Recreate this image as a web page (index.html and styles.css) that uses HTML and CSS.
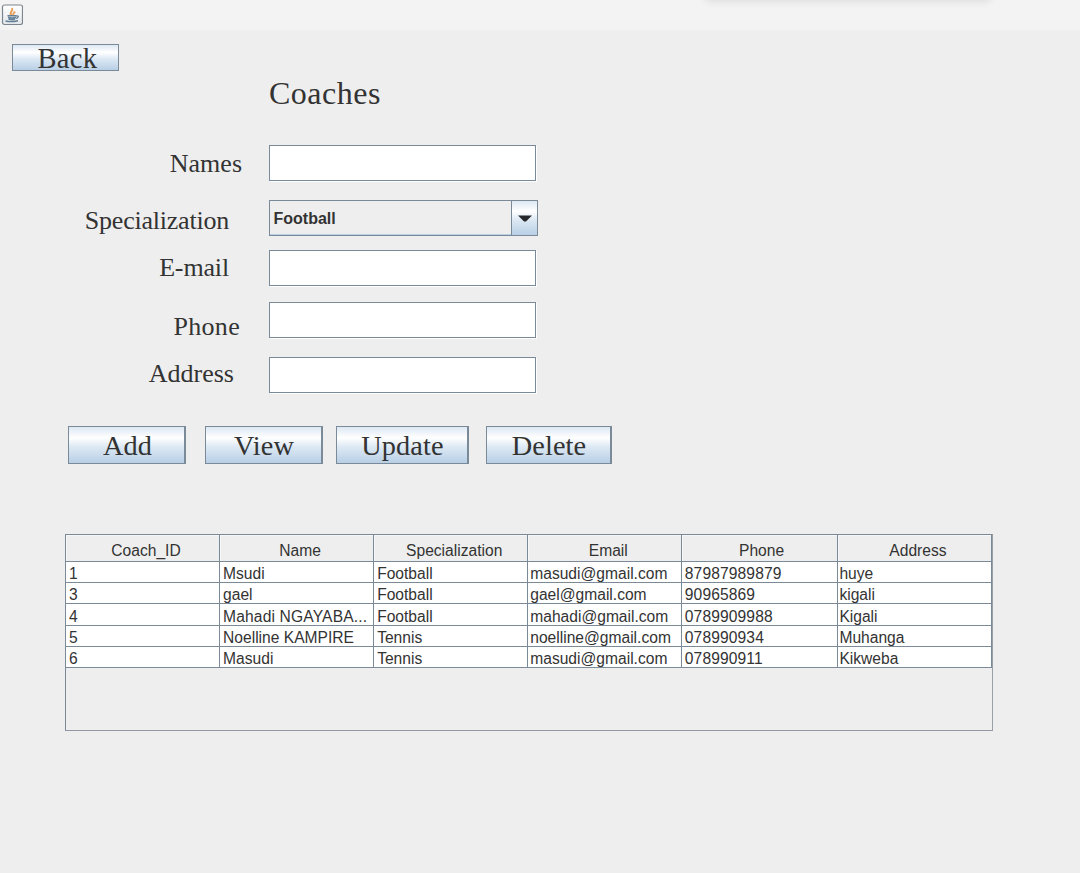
FILE: index.html
```html
<!DOCTYPE html>
<html lang="en">
<head>
<meta charset="utf-8">
<title>Coaches</title>
<link rel="stylesheet" href="styles.css">
</head>
<body>
<header class="titlebar">
<svg class="java-icon" width="22" height="22" viewBox="0 0 22 22">
<defs><linearGradient id="face" x1="0" y1="0" x2="0" y2="1"><stop offset="0" stop-color="#fff"/><stop offset="1" stop-color="#e3e7ea"/></linearGradient></defs>
<rect x="1.500" y="1" width="20" height="19.500" rx="2" fill="url(#face)" stroke="#7c858d" stroke-width="1.200"/>
<path d="M10.500 11.500C7.500 8.500 12.500 7 11 4M12.500 11C11.500 9.500 13.500 8.500 14 7.500" fill="none" stroke="#e9a15b" stroke-width="2"/>
<path d="M6.500 11.800h8.500M7 13.500q4 1 8 0M7.500 15.200q3 1 6.500 0M15 12q3-.5 2 1.200-.5 1-2 1.200M4.500 17q6 1.400 12.500-.2" fill="none" stroke="#668197" stroke-width="1.400"/>
</svg>
</header>
<main class="content">
<button class="btn back">Back</button>
<h1 class="heading">Coaches</h1>
<form class="form">
<div class="row names"><label for="names">Names</label><input id="names" class="field"></div>
<div class="row specialization"><label>Specialization</label><div class="combo"><span class="value">Football</span><span class="arrow"><svg width="14" height="7" viewBox="0 0 14 7"><path d="M0 .5H14L8 6.500H6Z" fill="#26282b"/></svg></span></div></div>
<div class="row email"><label for="email">E-mail</label><input id="email" class="field"></div>
<div class="row phone"><label for="phone">Phone</label><input id="phone" class="field"></div>
<div class="row address"><label for="address">Address</label><input id="address" class="field"></div>
</form>
<div class="actions">
<button class="btn add">Add</button><button class="btn view">View</button><button class="btn update">Update</button><button class="btn delete">Delete</button>
</div>
<div class="scroll-pane">
<table class="grid">
<colgroup><col class="c-id"><col class="c-std"><col class="c-std"><col class="c-std"><col class="c-phone"><col class="c-std"></colgroup>
<thead><tr><th>Coach_ID</th><th>Name</th><th>Specialization</th><th>Email</th><th>Phone</th><th>Address</th></tr></thead>
<tbody>
<tr><td>1</td><td>Msudi</td><td>Football</td><td>masudi@gmail.com</td><td>87987989879</td><td>huye</td></tr>
<tr><td>3</td><td>gael</td><td>Football</td><td>gael@gmail.com</td><td>90965869</td><td>kigali</td></tr>
<tr class="tall"><td>4</td><td class="clipped">Mahadi NGAYABA...</td><td>Football</td><td>mahadi@gmail.com</td><td>0789909988</td><td>Kigali</td></tr>
<tr><td>5</td><td>Noelline KAMPIRE</td><td>Tennis</td><td>noelline@gmail.com</td><td>078990934</td><td>Muhanga</td></tr>
<tr><td>6</td><td>Masudi</td><td>Tennis</td><td>masudi@gmail.com</td><td>078990911</td><td>Kikweba</td></tr>
</tbody>
</table>
</div>
</main>
</body>
</html>
```
FILE: styles.css
```css
* { box-sizing: border-box; }
body { margin: 0; width: 1080px; height: 873px; overflow: hidden; background: #eeeeee; color: #333; font-family: "Liberation Sans", Arial, sans-serif; }
.titlebar { position: relative; height: 30px; padding: 4px 0 0 1px; overflow: hidden; background: #f3f3f3; }
.titlebar::after { content: ""; position: absolute; left: 706px; top: -20px; width: 284px; height: 20px; border-radius: 6px; box-shadow: 0 1px 6px 2px #e2e2e2; }
.java-icon { display: block; }
.content { display: flex; flex-direction: column; align-items: flex-start; padding-top: 14px; }
.btn { display: flex; align-items: center; justify-content: center; padding: 0; border: 1px solid #7a8a99; border-right-width: 2px; border-radius: 0; background: linear-gradient(#dde8f3 0%, #ffffff 30%, #dde9f4 55%, #b8cfe5 100%); color: #333; font: 28.3px/30px "Liberation Serif", "Times New Roman", serif; }
.back { width: 107px; height: 27px; margin-left: 12px; padding: 1px 0 0 4px; font-size: 28.5px; line-height: 25px; letter-spacing: .35px; border-right-width: 1px; }
.heading { margin: 4px 0 0 269px; height: 38px; font: 32px/37px "Liberation Serif", serif; letter-spacing: .5px; }
.form { margin-top: 32px; }
.row { display: flex; align-items: flex-start; }
.row label { flex: none; width: 269px; height: 30px; text-align: right; white-space: nowrap; font: 26px/30px "Liberation Serif", serif; }
.field { display: block; width: 267px; height: 36px; padding: 0 4px; border: 1px solid #7a8a99; border-right-width: 1.500px; border-radius: 0; background: #fff; box-shadow: 1px 1px 0 #fff; }
.names { height: 55px; }
.names label { padding-right: 27px; margin-top: 4px; }
.specialization { height: 50px; }
.specialization label { padding-right: 40px; margin-top: 6px; letter-spacing: -.22px; }
.email { height: 52px; }
.email label { padding-right: 40px; margin-top: 3px; letter-spacing: -.15px; }
.phone { height: 55px; }
.phone label { padding-right: 29px; margin-top: 10px; letter-spacing: .3px; }
.phone .field { margin-top: -.5px; }
.address { height: 36px; }
.address label { padding-right: 35px; margin-top: 2px; }
.combo { display: flex; width: 269px; height: 36px; border: 1px solid #7a8a99; box-shadow: inset 0 -1px 0 #b8cfe5; }
.value { flex: 1; padding-left: 3.500px; font-size: 16px; font-weight: bold; line-height: 35px; }
.arrow { display: flex; width: 26px; padding-left: 1px; align-items: center; justify-content: center; border-left: 1px solid #7a8a99; background: linear-gradient(#dde8f3, #fff 30%, #dde9f4 55%, #b8cfe5); }
.actions { display: flex; margin: 33px 0 0 68px; }
.actions .btn { height: 38px; padding-top: 1px; letter-spacing: .1px; }
.actions .add { width: 118px; margin-right: 19px; padding-left: 2px; }
.actions .view { width: 118px; margin-right: 13px; padding-left: 1px; }
.actions .update { width: 133px; margin-right: 17px; padding-left: 1px; }
.actions .delete { width: 126px; padding-left: 1px; }
.scroll-pane { width: 928px; height: 197px; margin: 70px 0 0 65px; border: 1px solid #7a8a99; border-right-color: #9a9fa8; border-bottom-color: #8f98a3; }
.grid { width: 926px; table-layout: fixed; border-spacing: 0; border-collapse: separate; font-size: 15.600px; }
.c-std { width: 154px; }
.c-id { width: 154px; }
.c-phone { width: 155.500px; }
.grid th { height: 27px; padding: 5px 0 0 7px; border-right: 1px solid #7a8a99; border-bottom: 1px solid #7a8a99; font-weight: normal; line-height: 20px; box-shadow: inset 1px 1px 0 #f7f7f7; }
.grid th:nth-child(5) { padding-left: 4px; }
.grid td { height: 21px; padding: 3px 0 0 3px; border-right: 1px solid #7a8a99; border-bottom: 1px solid #7a8a99; background: #fff; line-height: 17px; white-space: nowrap; }
.grid td:nth-child(4) { padding-left: 2px; }
.grid td:nth-child(5) { padding-left: 2.500px; letter-spacing: .12px; }
.grid td:nth-child(6) { padding-left: 1.500px; }
.grid td.clipped { letter-spacing: .15px; }
.grid .tall td { height: 22px; }
```
